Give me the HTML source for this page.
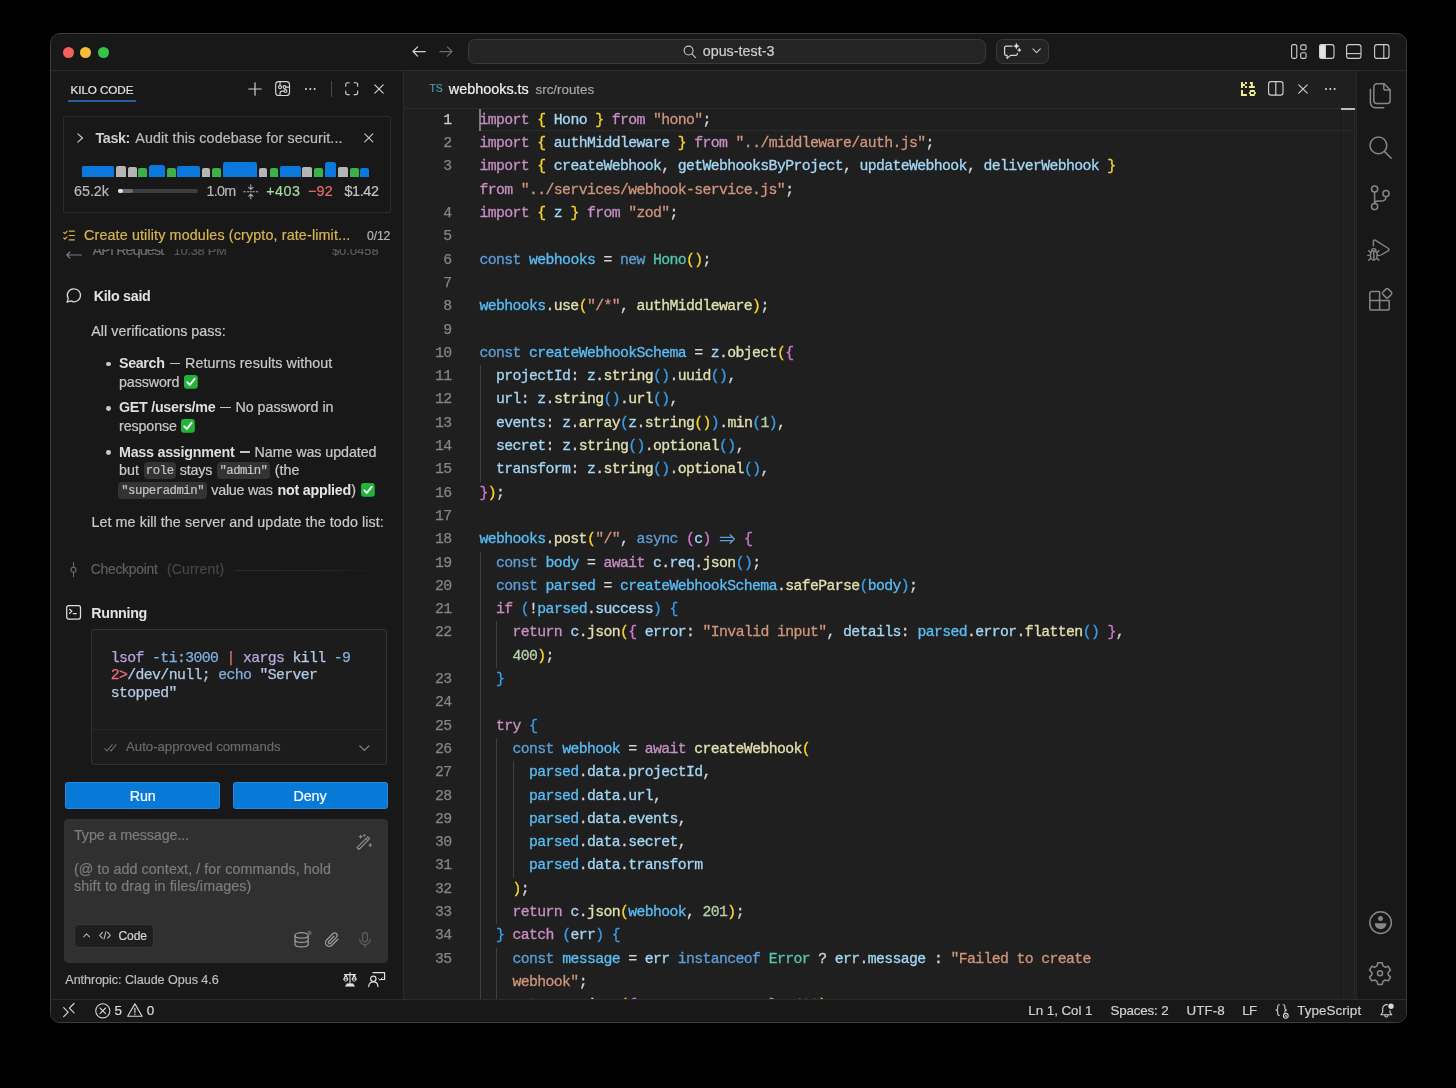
<!DOCTYPE html>
<html><head><meta charset="utf-8"><title>opus-test-3</title>
<style>
*{box-sizing:border-box;margin:0;padding:0}
html,body{width:1456px;height:1088px;background:#000;overflow:hidden}
body{position:relative;font-family:"Liberation Sans",sans-serif;color:#ccc;-webkit-font-smoothing:antialiased}
.a{position:absolute}
.t{position:absolute;white-space:pre;line-height:1;-webkit-text-stroke:.2px}
svg{position:absolute;overflow:visible}
#win{left:50px;top:33px;width:1357px;height:990px;background:#181818;border-radius:10px;border:1px solid #3c3c3c;box-shadow:0 0 0 1px #000}
.mono{font-family:"Liberation Mono",monospace}
.b{font-weight:700}
/* code colours */
.k{color:#c88fc4}.v{color:#a3d7f5}.s{color:#d0957c}.p{color:#d4d4d4}.c{color:#5c9fd8}.w{color:#59bdf6}
.y{color:#52c8b0}.f{color:#e0e0b0}.n{color:#b8d0ac}.b1{color:#fbd526}.b2{color:#d676d2}.b3{color:#379fec}
#code{left:404px;top:108.9px;width:938px;height:890.1px;overflow:hidden}
.r{position:absolute;left:0;height:23.3px;line-height:23.3px;white-space:pre;font-family:"Liberation Mono",monospace;font-size:14.8px;letter-spacing:-.62px;color:#d4d4d4;-webkit-text-stroke:.3px}
.r i{position:absolute;left:0;width:47.5px;text-align:right;font-style:normal;color:#858585;-webkit-text-stroke:.25px}
.r b{position:absolute;left:75.5px;font-weight:400}
.g{position:absolute;width:1px;background:#404040}
</style></head><body>
<div id="win" class="a"></div>
<div id="all" class="a" style="left:0;top:0;width:1456px;height:1088px;will-change:transform">
<!-- TITLE BAR -->
<div class="a" style="left:51px;top:70px;width:1355px;height:1px;background:#2b2b2b"></div>
<div class="a" style="left:62.5px;top:46.6px;width:11px;height:11px;border-radius:50%;background:#f4605b"></div>
<div class="a" style="left:80.1px;top:46.6px;width:11px;height:11px;border-radius:50%;background:#fabb38"></div>
<div class="a" style="left:97.7px;top:46.6px;width:11px;height:11px;border-radius:50%;background:#34c648"></div>
<svg style="left:411.5px;top:46px;width:14px;height:11px" viewBox="0 0 14 11" fill="none" stroke="#d0d0d0" stroke-width="1.25" stroke-linecap="round" stroke-linejoin="round"><path d="M13.2 5.5H1M5.6 0.9L1 5.5l4.6 4.6"/></svg>
<svg style="left:439px;top:46px;width:14px;height:11px" viewBox="0 0 14 11" fill="none" stroke="#6a6a6a" stroke-width="1.25" stroke-linecap="round" stroke-linejoin="round"><path d="M0.8 5.5H13M8.4 0.9L13 5.5l-4.6 4.6"/></svg>
<div class="a" style="left:468px;top:39px;width:517.5px;height:24.6px;background:#242424;border:1px solid #3a3a3a;border-radius:7px"></div>
<svg style="left:682.5px;top:44.5px;width:13.5px;height:13.5px" viewBox="0 0 14 14" fill="none" stroke="#c4c4c4" stroke-width="1.15" stroke-linecap="round"><circle cx="5.8" cy="5.8" r="4.6"/><path d="M9.2 9.2L13 13"/></svg>
<span class="t" style="left:702.7px;top:44.1px;font-size:14.3px;color:#cfcfcf;letter-spacing:0.024px">opus-test-3</span>
<div class="a" style="left:995.8px;top:39px;width:52.9px;height:24.6px;background:#232323;border:1px solid #3a3a3a;border-radius:7px"></div>
<!-- chat sparkle -->
<svg style="left:1003px;top:43.5px;width:19px;height:16px" viewBox="0 0 19 16" fill="none" stroke="#d6d6d6" stroke-width="1.25" stroke-linejoin="round" stroke-linecap="round"><path d="M9 2.200H3.200C2.300 2.200 1.600 2.900 1.600 3.800v6c0 .9.700 1.600 1.600 1.600h.900v3l3.400-3h5.200c.900 0 1.600-.700 1.600-1.600V9.400"/><path d="M13.400-.6l.8 1.900 1.900.8-1.900.8-.8 1.900-.8-1.900-1.900-.8 1.900-.8z" fill="#e6e6e6" stroke-width=".5"/><path d="M16.300 4.200l.6 1.300 1.300.6-1.300.6-.6 1.300-.6-1.300-1.300-.6 1.300-.6z" fill="#e6e6e6" stroke-width=".4"/></svg>
<svg style="left:1032.2px;top:48.2px;width:9.200px;height:5.600px" viewBox="0 0 10 6" fill="none" stroke="#c8c8c8" stroke-width="1.2" stroke-linecap="round" stroke-linejoin="round"><path d="M1 1l4 4 4-4"/></svg>
<!-- layout icons -->
<svg style="left:1291px;top:44px;width:16px;height:15px" viewBox="0 0 16 15" fill="none" stroke="#cfcfcf" stroke-width="1.1"><rect x=".6" y=".6" width="5.2" height="13.8" rx="1.6"/><rect x="9.700" y=".9" width="5.400" height="4.800" rx="1.500"/><rect x="9.700" y="8.800" width="5.400" height="5.600" rx="1.500"/></svg>
<svg style="left:1318.8px;top:44px;width:16px;height:15px" viewBox="0 0 16 15" fill="none" stroke="#cfcfcf" stroke-width="1.1"><rect x=".6" y=".6" width="14.4" height="13.8" rx="2.4"/><path d="M3 .6h3.4v13.8H3C1.7 14.4.6 13.3.6 12V3C.6 1.7 1.7.6 3 .6z" fill="#e4e4e4"/></svg>
<svg style="left:1346.2px;top:44px;width:16px;height:15px" viewBox="0 0 16 15" fill="none" stroke="#cfcfcf" stroke-width="1.1"><rect x=".6" y=".6" width="14.4" height="13.8" rx="2.4"/><path d="M.6 9.6H15"/></svg>
<svg style="left:1373.6px;top:44px;width:16px;height:15px" viewBox="0 0 16 15" fill="none" stroke="#cfcfcf" stroke-width="1.1"><rect x=".6" y=".6" width="14.4" height="13.8" rx="2.4"/><path d="M9.8 .6v13.8"/></svg>
<!-- SIDEBAR -->
<div class="a" style="left:403px;top:71px;width:1px;height:928px;background:#2b2b2b"></div>
<span class="t" style="left:70.6px;top:84.3px;font-size:11.7px;color:#e2e2e2;letter-spacing:-0.095px">KILO CODE</span>
<div class="a" style="left:68px;top:100.3px;width:67.5px;height:1.3px;background:#2a5f9e"></div>
<!-- header icons -->
<svg style="left:248px;top:82px;width:14px;height:14px" viewBox="0 0 14 14" fill="none" stroke="#d0d0d0" stroke-width="1.2" stroke-linecap="round"><path d="M7 .8v12.4M.8 7h12.4"/></svg>
<svg style="left:275px;top:81.3px;width:15.2px;height:15.2px" viewBox="0 0 16 16" fill="none" stroke="#d4d4d4" stroke-width="1.2" stroke-linecap="round"><rect x=".7" y=".7" width="14.6" height="14.6" rx="3.2"/><path d="M5.300.7v3.900"/><circle cx="5.300" cy="6.400" r="1.600"/><circle cx="10" cy="6.400" r="1.500"/><path d="M11.500 6.400h3.800"/><circle cx="11.100" cy="10.600" r="1.500"/><path d="M5.300 15.300v-2.500c0-1.300.9-2.200 2.200-2.200h2.100"/></svg>
<div class="a" style="left:304.5px;top:87.900px;width:2.300px;height:2.300px;border-radius:50%;background:#dcdcdc;box-shadow:4.300px 0 0 #dcdcdc,8.600px 0 0 #dcdcdc"></div>
<div class="a" style="left:330.6px;top:81px;width:1px;height:16.4px;background:#4a4a4a"></div>
<svg style="left:345px;top:82.2px;width:13.4px;height:13.4px" viewBox="0 0 14 14" fill="none" stroke="#d0d0d0" stroke-width="1.2" stroke-linecap="round" stroke-linejoin="round"><path d="M.8 4.4V2.6C.8 1.6 1.6.8 2.6.8h1.8M9.6.8h1.8c1 0 1.8.8 1.8 1.800v1.800M13.200 9.600v1.800c0 1-.8 1.800-1.800 1.800H9.600M4.400 13.200H2.600c-1 0-1.800-.8-1.800-1.800V9.600"/></svg>
<svg style="left:373.8px;top:84px;width:10px;height:10px" viewBox="0 0 10 10" fill="none" stroke="#d0d0d0" stroke-width="1.2" stroke-linecap="round"><path d="M.8.8l8.400 8.400M9.200.8L.8 9.200"/></svg>
<!-- task box -->
<div class="a" style="left:62.5px;top:116px;width:328.5px;height:96.8px;border:1px solid #2c2c2c;border-radius:2px;background:#181818"></div>
<svg style="left:77.300px;top:133.300px;width:6.400px;height:10px" viewBox="0 0 6.400 10" fill="none" stroke="#c8c8c8" stroke-width="1.15" stroke-linecap="round" stroke-linejoin="round"><path d="M.8.800l4.700 4.200-4.700 4.200"/></svg>
<span class="t" style="left:95.5px;top:131.2px;font-size:14.3px;color:#cfcfcf;font-weight:700;-webkit-text-stroke:0;letter-spacing:-0.359px">Task:</span>
<span class="t" style="left:135.3px;top:131.2px;font-size:14.3px;color:#bdbdbd;letter-spacing:0.114px">Audit this codebase for securit...</span>
<svg style="left:363.800px;top:133.400px;width:9.600px;height:9.600px" viewBox="0 0 10 10" fill="none" stroke="#c8c8c8" stroke-width="1.15" stroke-linecap="round"><path d="M.8.8l8.400 8.400M9.200.8L.8 9.200"/></svg>
<!-- timeline bars: bottom y=176.4 -->
<div class="a" style="left:0;top:.4px">
<div class="a" style="left:81.900px;top:165.500px;width:32.100px;height:10.900px;background:#0b78de;border-radius:1.5px 1.5px 0 0"></div>
<div class="a" style="left:116.100px;top:166px;width:9.700px;height:10.400px;background:#b5b5b5;border-radius:2px 2px 0 0"></div>
<div class="a" style="left:128px;top:166.800px;width:8.500px;height:9.600px;background:#b5b5b5;border-radius:2px 2px 0 0"></div>
<div class="a" style="left:138.300px;top:167.900px;width:8.800px;height:8.500px;background:#3eb04b;border-radius:2px 2px 0 0"></div>
<div class="a" style="left:149.200px;top:164.200px;width:15.800px;height:12.200px;background:#0b78de;border-radius:2.500px 2.500px 0 0"></div>
<div class="a" style="left:166.800px;top:167.900px;width:8.900px;height:8.500px;background:#3eb04b;border-radius:2px 2px 0 0"></div>
<div class="a" style="left:177.300px;top:165.600px;width:22.700px;height:10.800px;background:#0b78de;border-radius:2px 2px 0 0"></div>
<div class="a" style="left:201.600px;top:167.600px;width:8.800px;height:8.800px;background:#b5b5b5;border-radius:2px 2px 0 0"></div>
<div class="a" style="left:212.100px;top:167.900px;width:8.900px;height:8.500px;background:#3eb04b;border-radius:2px 2px 0 0"></div>
<div class="a" style="left:222.900px;top:161.400px;width:33.800px;height:15px;background:#0b78de;border-radius:2.500px 2.500px 0 0"></div>
<div class="a" style="left:259px;top:167.600px;width:8.400px;height:8.800px;background:#b5b5b5;border-radius:2px 2px 0 0"></div>
<div class="a" style="left:269.500px;top:167.900px;width:8.700px;height:8.500px;background:#3eb04b;border-radius:2px 2px 0 0"></div>
<div class="a" style="left:280px;top:165.600px;width:20.500px;height:10.800px;background:#0b78de;border-radius:2px 2px 0 0"></div>
<div class="a" style="left:302.300px;top:166.800px;width:9.700px;height:9.600px;background:#b5b5b5;border-radius:2px 2px 0 0"></div>
<div class="a" style="left:314px;top:167.900px;width:8.500px;height:8.500px;background:#3eb04b;border-radius:2px 2px 0 0"></div>
<div class="a" style="left:324.700px;top:162px;width:11.600px;height:14.400px;background:#0b78de;border-radius:2.500px 2.500px 0 0"></div>
<div class="a" style="left:338.300px;top:166.800px;width:9.700px;height:9.600px;background:#b5b5b5;border-radius:2px 2px 0 0"></div>
<div class="a" style="left:350px;top:167.900px;width:8.800px;height:8.500px;background:#3eb04b;border-radius:2px 2px 0 0"></div>
<div class="a" style="left:360.400px;top:167.600px;width:9.100px;height:8.800px;background:#0b78de;border-radius:2px 2px 0 0"></div>
</div>
<span class="t" style="left:74.0px;top:184.1px;font-size:14.3px;color:#b8b8b8">65.2k</span>
<div class="a" style="left:118px;top:189px;width:79.700px;height:4.200px;border-radius:2.100px;background:#3d3d3d"></div>
<div class="a" style="left:118px;top:189px;width:15.400px;height:4.200px;border-radius:2.100px;background:#6b6b6b"></div>
<div class="a" style="left:118px;top:189px;width:5px;height:4.200px;border-radius:2.100px;background:#e4e4e4"></div>
<span class="t" style="left:206.6px;top:184.1px;font-size:14.3px;color:#b8b8b8;letter-spacing:-0.749px">1.0m</span>
<!-- fold icon -->
<svg style="left:243px;top:183.500px;width:15.600px;height:15.600px" viewBox="0 0 16 16" fill="none" stroke="#b0b0b0" stroke-width="1.05" stroke-linecap="round" stroke-linejoin="round"><path d="M8 .8v4.600M5.800 3.400L8 5.600l2.200-2.200M8 15.200v-4.600M5.800 12.600L8 10.400l2.200 2.200"/><path d="M.8 8h1.500M4.400 8h1.500M7.300 8h1.500M10.200 8h1.500M13.600 8h1.600"/></svg>
<span class="t" style="left:266.3px;top:184.1px;font-size:14.3px;color:#a5dba0;letter-spacing:0.449px">+403</span>
<span class="t" style="left:308.0px;top:184.1px;font-size:14.3px;color:#ea6a6a;letter-spacing:0.245px">−92</span>
<span class="t" style="left:344.5px;top:184.1px;font-size:14.3px;color:#c4c4c4;letter-spacing:-0.336px">$1.42</span>
<!-- todo row -->
<svg style="left:63px;top:229.700px;width:12px;height:11.400px" viewBox="0 0 12 11.400" fill="none" stroke="#d6b24c" stroke-width="1.15" stroke-linecap="round" stroke-linejoin="round"><path d="M.7 2.400l1.200 1.200L4 1.300M.7 7.900l1.200 1.200L4 6.800M6.200 1.100h5.200M6.200 5.500h5.200M6.200 9.900h5.200"/></svg>
<span class="t" style="left:84.0px;top:228.3px;font-size:14.3px;color:#d9b651;letter-spacing:0.146px">Create utility modules (crypto, rate-limit...</span>
<span class="t" style="left:367.0px;top:230.0px;font-size:12.2px;color:#b4b4b4;letter-spacing:-0.134px">0/12</span>
<!-- clipped previous row -->
<div class="a" style="left:60px;top:249.300px;width:335px;height:12px;overflow:hidden">
 <svg style="left:5.800px;top:1.900px;width:16px;height:8px" viewBox="0 0 16 8" fill="none" stroke="#7d7d7d" stroke-width="1.1" stroke-linecap="round" stroke-linejoin="round"><path d="M15.400 4H.8M3.800 1L.8 4l3 3"/></svg>
 <span class="t" style="left:32.6px;top:-6.7px;font-size:14.3px;color:#6f6f6f;letter-spacing:-0.871px">API Request</span>
 <span class="t" style="left:113.6px;top:-5.6px;font-size:13.0px;color:#585858;letter-spacing:-0.345px">10:38 PM</span>
 <span class="t" style="left:271.9px;top:-5.6px;font-size:13.0px;color:#5c5c5c;letter-spacing:-0.043px">$0.0458</span>
</div>
<!-- KILO SAID -->
<svg style="left:65.800px;top:288.300px;width:15.600px;height:15px" viewBox="0 0 16 15.400" fill="none" stroke="#d8d8d8" stroke-width="1.3" stroke-linejoin="round" stroke-linecap="round"><path d="M8.400.9A6.600 6.600 0 1 1 5 13.200L1 14.600l1.300-3.700A6.600 6.600 0 0 1 8.400.9z"/></svg>
<span class="t" style="left:93.7px;top:288.5px;font-size:14.3px;color:#e2e2e2;font-weight:700;-webkit-text-stroke:0;letter-spacing:-0.310px">Kilo said</span>
<span class="t" style="left:91.2px;top:323.9px;font-size:14.3px;color:#c9c9c9;letter-spacing:0.048px">All verifications pass:</span>
<div class="a" style="left:105.900px;top:361.600px;width:4.800px;height:4.800px;border-radius:50%;background:#c9c9c9"></div>
<span class="t" style="left:119.0px;top:356.0px;font-size:14.3px;color:#dedede;font-weight:700;-webkit-text-stroke:0;letter-spacing:-0.365px">Search</span>
<div class="a" style="left:169.6px;top:362.9px;width:10.4px;height:1.2px;background:#c4c4c4"></div>
<span class="t" style="left:185.1px;top:356.0px;font-size:14.3px;color:#c9c9c9;letter-spacing:0.082px">Returns results without</span>
<span class="t" style="left:119.0px;top:374.6px;font-size:14.3px;color:#c9c9c9;letter-spacing:-0.113px">password</span>
<svg style="left:183.500px;top:375px;width:13.800px;height:13.800px" viewBox="0 0 14 14"><rect width="14" height="14" rx="3" fill="#22b33a"/><path d="M3.300 7.400l2.600 2.700 4.900-6.200" fill="none" stroke="#fff" stroke-width="1.900" stroke-linecap="round" stroke-linejoin="round"/></svg>
<div class="a" style="left:105.900px;top:405.900px;width:4.800px;height:4.800px;border-radius:50%;background:#c9c9c9"></div>
<span class="t" style="left:119.0px;top:400.3px;font-size:14.3px;color:#dedede;font-weight:700;-webkit-text-stroke:0;letter-spacing:-0.287px">GET /users/me</span>
<div class="a" style="left:220.2px;top:407.2px;width:10.4px;height:1.2px;background:#c4c4c4"></div>
<span class="t" style="left:235.4px;top:400.3px;font-size:14.3px;color:#c9c9c9;letter-spacing:-0.032px">No password in</span>
<span class="t" style="left:119.0px;top:418.7px;font-size:14.3px;color:#c9c9c9;letter-spacing:-0.116px">response</span>
<svg style="left:181.400px;top:419.300px;width:13.800px;height:13.800px" viewBox="0 0 14 14"><rect width="14" height="14" rx="3" fill="#22b33a"/><path d="M3.300 7.400l2.600 2.700 4.900-6.200" fill="none" stroke="#fff" stroke-width="1.900" stroke-linecap="round" stroke-linejoin="round"/></svg>
<div class="a" style="left:105.900px;top:450px;width:4.800px;height:4.800px;border-radius:50%;background:#c9c9c9"></div>
<span class="t" style="left:119.0px;top:444.5px;font-size:14.3px;color:#dedede;font-weight:700;-webkit-text-stroke:0;letter-spacing:-0.252px">Mass assignment</span>
<div class="a" style="left:239.5px;top:451.4px;width:10.4px;height:1.2px;background:#c4c4c4"></div>
<span class="t" style="left:254.5px;top:444.5px;font-size:14.3px;color:#c9c9c9;letter-spacing:-0.074px">Name was updated</span>
<span class="t" style="left:119.0px;top:463.2px;font-size:14.3px;color:#c9c9c9;letter-spacing:0.042px">but</span>
<div class="a" style="left:143.700px;top:462.200px;width:32.200px;height:17.200px;border-radius:4px;background:#333"></div>
<span class="t mono" style="left:145.8px;top:465.2px;font-size:12.3px;color:#c4c4c4;letter-spacing:-0.408px">role</span>
<span class="t" style="left:179.7px;top:463.2px;font-size:14.3px;color:#c9c9c9;letter-spacing:-0.155px">stays</span>
<div class="a" style="left:216.800px;top:462.200px;width:53.300px;height:17.200px;border-radius:4px;background:#333"></div>
<span class="t mono" style="left:219.5px;top:465.2px;font-size:12.3px;color:#c4c4c4;letter-spacing:-0.551px">"admin"</span>
<span class="t" style="left:274.7px;top:463.2px;font-size:14.3px;color:#c9c9c9;letter-spacing:0.040px">(the</span>
<div class="a" style="left:118.100px;top:481.900px;width:89px;height:17.200px;border-radius:4px;background:#333"></div>
<span class="t mono" style="left:121.2px;top:484.9px;font-size:12.3px;color:#c4c4c4;letter-spacing:-0.472px">"superadmin"</span>
<span class="t" style="left:211.3px;top:482.5px;font-size:14.3px;color:#c9c9c9;letter-spacing:-0.242px">value was</span>
<span class="t" style="left:277.6px;top:482.5px;font-size:14.3px;color:#e4e4e4;font-weight:700;-webkit-text-stroke:0;letter-spacing:-0.259px">not applied</span>
<span class="t" style="left:351.3px;top:482.5px;font-size:14.3px;color:#c9c9c9;letter-spacing:-0.366px">)</span>
<svg style="left:360.900px;top:482.900px;width:13.800px;height:13.800px" viewBox="0 0 14 14"><rect width="14" height="14" rx="3" fill="#22b33a"/><path d="M3.300 7.400l2.600 2.700 4.900-6.200" fill="none" stroke="#fff" stroke-width="1.900" stroke-linecap="round" stroke-linejoin="round"/></svg>
<span class="t" style="left:91.4px;top:515.3px;font-size:14.3px;color:#c9c9c9;letter-spacing:0.083px">Let me kill the server and update the todo list:</span>
<!-- checkpoint -->
<svg style="left:70.400px;top:561.800px;width:7px;height:15.400px" viewBox="0 0 7 15.400" fill="none" stroke="#6c6c6c" stroke-width="1.1" stroke-linecap="round"><path d="M3.500.6v4.400M3.500 10.400v4.400"/><circle cx="3.500" cy="7.700" r="2.500"/></svg>
<span class="t" style="left:90.8px;top:562.8px;font-size:13.8px;color:#5f5f5f;letter-spacing:-0.223px">Checkpoint</span>
<span class="t" style="left:167.0px;top:562.8px;font-size:13.8px;color:#464646;letter-spacing:0.233px">(Current)</span>
<div class="a" style="left:235px;top:570px;width:133px;height:1px;background:linear-gradient(90deg,#2c2c2c,#262626 70%,#1b1b1b)"></div>
<!-- running -->
<svg style="left:66.400px;top:604.600px;width:15.200px;height:14.800px" viewBox="0 0 15.200 14.800" fill="none" stroke="#e0e0e0" stroke-width="1.25" stroke-linecap="round" stroke-linejoin="round"><rect x=".7" y=".7" width="13.800" height="13.400" rx="2"/><path d="M3.600 4.300l2.300 2-2.300 2M7.300 8.600h3"/></svg>
<span class="t" style="left:91.3px;top:605.8px;font-size:14.3px;color:#e2e2e2;font-weight:700;-webkit-text-stroke:0;letter-spacing:-0.324px">Running</span>
<div class="a" style="left:91px;top:629.300px;width:295.500px;height:136.200px;border:1px solid #333;border-radius:3px;background:#1c1c1c"></div>
<div class="a" style="left:92px;top:728.600px;width:293.500px;height:1px;background:#262626"></div>
<div class="a mono" style="left:110.800px;top:649.900px;font-size:14.800px;letter-spacing:-.62px;line-height:17.400px;white-space:pre;color:#b4cbe6;-webkit-text-stroke:.25px"><span style="color:#b9a7e2">lsof</span> <span style="color:#80afe0">-ti:3000</span> <span style="color:#e2706c">|</span> <span style="color:#b9a7e2">xargs</span> kill <span style="color:#80afe0">-9</span>
<span style="color:#ea7079">2&gt;</span>/dev/null<span style="color:#b8c4d4">;</span> <span style="color:#80afe0">echo</span> "Server
stopped"</div>
<svg style="left:104.400px;top:744.400px;width:12.600px;height:7.600px" viewBox="0 0 12.600 7.600" fill="none" stroke="#6a6a6a" stroke-width="1.1" stroke-linecap="round" stroke-linejoin="round"><path d="M.7 4.600l2.200 2.300L8.300.7M6.300 6l.9.900L12 .7"/></svg>
<span class="t" style="left:126.0px;top:740.3px;font-size:13.2px;color:#6a6a6a">Auto-approved commands</span>
<svg style="left:358.800px;top:744.600px;width:10.800px;height:6.400px" viewBox="0 0 10.800 6.400" fill="none" stroke="#8a8a8a" stroke-width="1.2" stroke-linecap="round" stroke-linejoin="round"><path d="M.8.800l4.600 4.600L10 .8"/></svg>
<!-- buttons -->
<div class="a" style="left:65.300px;top:781.800px;width:154.800px;height:27.100px;background:#067ad6;border:1px solid #2688de;border-radius:2.500px"></div>
<div class="a" style="left:232.500px;top:781.800px;width:155px;height:27.100px;background:#067ad6;border:1px solid #2688de;border-radius:2.500px"></div>
<span class="t" style="left:129.7px;top:788.7px;font-size:14.3px;color:#fff;letter-spacing:-0.078px">Run</span>
<span class="t" style="left:293.4px;top:788.7px;font-size:14.3px;color:#fff;letter-spacing:-0.048px">Deny</span>
<!-- input -->
<div class="a" style="left:64.300px;top:818.600px;width:324.200px;height:144.400px;background:#303030;border-radius:4.500px"></div>
<span class="t" style="left:74.0px;top:827.9px;font-size:14.3px;color:#7c7c7c;letter-spacing:-0.108px">Type a message...</span>
<span class="t" style="left:74.0px;top:861.8px;font-size:14.3px;color:#7c7c7c;letter-spacing:0.064px">(@ to add context, / for commands, hold</span>
<span class="t" style="left:74.0px;top:879.1px;font-size:14.3px;color:#7c7c7c;letter-spacing:0.116px">shift to drag in files/images)</span>
<svg style="left:356.400px;top:833.600px;width:17px;height:16.400px" viewBox="0 0 17 16.400" fill="none" stroke="#8c8c8c" stroke-width="1.15" stroke-linecap="round" stroke-linejoin="round"><path d="M1 13.600L11.800 2.800l1.900 1.900L2.900 15.500zM9.900 4.700l1.900 1.900"/><path d="M4.600 1.300v2.600M3.300 2.600h2.600M14.300 9.800v2.600M13 11.100h2.600M8.300.7v1.400M7.600 1.400H9"/></svg>
<div class="a" style="left:74px;top:923.700px;width:80px;height:24px;background:#1e1e1e;border:1px solid #383838;border-radius:5px"></div>
<svg style="left:82.700px;top:933.300px;width:7.200px;height:4.600px" viewBox="0 0 7.200 4.600" fill="none" stroke="#b0b0b0" stroke-width="1.100" stroke-linecap="round" stroke-linejoin="round"><path d="M.7 3.900l2.900-3 2.900 3"/></svg>
<svg style="left:99.300px;top:931.300px;width:12px;height:8.600px" viewBox="0 0 12 8.600" fill="none" stroke="#c0c0c0" stroke-width="1.050" stroke-linecap="round" stroke-linejoin="round"><path d="M3.300 1.400L.7 4.300l2.600 2.900M8.700 1.400l2.600 2.900-2.600 2.900M7 .7L5 7.900"/></svg>
<span class="t" style="left:118.5px;top:929.8px;font-size:12.0px;color:#d4d4d4;letter-spacing:-0.072px">Code</span>
<svg style="left:293.600px;top:931.400px;width:17.400px;height:16.400px" viewBox="0 0 17.400 16.400" fill="none" stroke="#9c9c9c" stroke-width="1.250"><ellipse cx="7.600" cy="4.400" rx="6.600" ry="2.700"/><path d="M1 4.400v8.800c0 1.500 2.900 2.700 6.600 2.700s6.600-1.200 6.600-2.700V4.400M1 8.800c0 1.500 2.900 2.700 6.600 2.700s6.600-1.200 6.600-2.700"/><circle cx="15.400" cy="1.900" r="2.300" fill="#5e5e5e" stroke="none"/></svg>
<svg style="left:324.300px;top:931.800px;width:15.200px;height:16px" viewBox="0 0 15.200 16" fill="none" stroke="#9a9a9a" stroke-width="1.250" stroke-linecap="round" stroke-linejoin="round"><path d="M13.900 7.300l-6 6a3.700 3.700 0 0 1-5.300-5.300l6.200-6.200a2.500 2.500 0 0 1 3.600 3.600l-6.100 6.100a1.300 1.300 0 0 1-1.800-1.800l5.500-5.500"/></svg>
<svg style="left:359px;top:931.800px;width:12px;height:16px" viewBox="0 0 12 16" fill="none" stroke="#5e5e5e" stroke-width="1.250" stroke-linecap="round"><rect x="3.600" y=".7" width="4.800" height="9.200" rx="2.400"/><path d="M.8 7.400a5.200 5.200 0 0 0 10.400 0M6 12.600v2.700"/></svg>
<span class="t" style="left:65.3px;top:973.8px;font-size:12.6px;color:#bdbdbd;letter-spacing:-0.051px">Anthropic: Claude Opus 4.6</span>
<svg style="left:343px;top:972px;width:14px;height:14.600px" viewBox="0 0 14 14.600" fill="none" stroke="#e0e0e0" stroke-width="1.100" stroke-linecap="round" stroke-linejoin="round"><path d="M7 .6v11M1.500 2.600h11M2.800 2.800L.9 7.200M2.800 2.800l1.900 4.400M11.200 2.800L9.300 7.200M11.200 2.800l1.900 4.400"/><path d="M.8 7.300a2 1.900 0 0 0 4 0zM9.200 7.300a2 1.900 0 0 0 4 0z" stroke-width=".9"/><path d="M2.600 14.100l1.300-2.300h6.200l1.300 2.300z" fill="#e0e0e0" stroke-width=".6"/></svg>
<svg style="left:367.700px;top:971.800px;width:17.600px;height:15.200px" viewBox="0 0 17.600 15.200" fill="none" stroke="#e0e0e0" stroke-width="1.200" stroke-linecap="round" stroke-linejoin="round"><circle cx="5.300" cy="6.800" r="2.700"/><path d="M.7 14.600c0-2.900 2-4.700 4.600-4.700s4.600 1.800 4.600 4.700"/><path d="M5 .7h11.600v6.800h-3.400"/><path d="M10.800 6.800l1.300 1.400 2.400-2.500" stroke-width="1"/></svg>
<!-- EDITOR BG + TABS -->
<div class="a" style="left:404px;top:71px;width:952px;height:928px;background:#1f1f1f"></div>
<div class="a" style="left:404px;top:71px;width:952px;height:37.500px;background:#1f1f1f"></div>
<div class="a" style="left:404px;top:108px;width:952px;height:1px;background:#2b2b2b"></div>
<span class="t" style="left:429.6px;top:84.1px;font-size:10.4px;color:#4f94b8;letter-spacing:-0.291px">TS</span>
<span class="t" style="left:448.8px;top:82.0px;font-size:14.4px;color:#f2f2f2">webhooks.ts</span>
<span class="t" style="left:535.6px;top:82.7px;font-size:13.3px;color:#a6a6a6;letter-spacing:0.011px">src/routes</span>
<!-- kilo logo -->
<svg style="left:1240.800px;top:82px;width:14.800px;height:14px" viewBox="0 0 15 14" fill="#eef08c"><path d="M0 0h2v2h2v2H2v2H0zM4 0h2v2H4zM4 4h2v2H4zM9 0h3v4h2v2H8V4h2V2H9zM0 8h2v4h4v2H0zM9 8h5v2H9zM8 10h2v2H8zM13 10h2v2h-2zM9 12h5v2H9z"/></svg>
<svg style="left:1267.600px;top:81.400px;width:15.600px;height:14.800px" viewBox="0 0 15.600 14.800" fill="none" stroke="#d0d0d0" stroke-width="1.150"><rect x=".6" y=".6" width="14.400" height="13.600" rx="2.400"/><path d="M7.800.6v13.600"/></svg>
<svg style="left:1298.200px;top:84px;width:10px;height:10px" viewBox="0 0 10 10" fill="none" stroke="#d0d0d0" stroke-width="1.150" stroke-linecap="round"><path d="M.8.8l8.400 8.400M9.200.8L.8 9.200"/></svg>
<div class="a" style="left:1325.200px;top:87.900px;width:2.300px;height:2.300px;border-radius:50%;background:#dcdcdc;box-shadow:4.300px 0 0 #dcdcdc,8.600px 0 0 #dcdcdc"></div>
<!-- scrollbar / overview ruler -->
<div class="a" style="left:1341px;top:109px;width:1px;height:890px;background:#181818"></div><div class="a" style="left:1342px;top:109px;width:1px;height:890px;background:#272727"></div><div class="a" style="left:1354px;top:109px;width:1px;height:890px;background:#262626"></div>
<div class="a" style="left:1342px;top:130.300px;width:13px;height:1px;background:#2a2a2a"></div>
<div class="a" style="left:1341px;top:108px;width:14.300px;height:1.700px;background:#bcbcbc"></div>
<!-- CODE -->
<div id="code" class="a">
<div class="a" style="left:75px;top:-.9px;width:863px;height:22.800px;border-top:1px solid #2a2a2a;border-bottom:1px solid #2a2a2a"></div>
<div class="a" style="left:75px;top:-.5px;width:2px;height:22.500px;background:#7c7c7c"></div>
<div class="g" style="left:75.8px;top:256.3px;height:116.5px"></div>
<div class="g" style="left:75.8px;top:442.7px;height:466.0px"></div>
<div class="g" style="left:92.3px;top:512.6px;height:46.6px"></div>
<div class="g" style="left:92.3px;top:629.1px;height:186.4px"></div>
<div class="g" style="left:92.3px;top:838.8px;height:69.9px"></div>
<div class="g" style="left:108.8px;top:652.4px;height:116.5px"></div>
<div class="r" style="top:0.0px"><i style="color:#ccc">1</i><b><span class="k">import</span> <span class="b1">{</span> <span class="v">Hono</span> <span class="b1">}</span> <span class="k">from</span> <span class="s">"hono"</span>;</b></div>
<div class="r" style="top:23.3px"><i>2</i><b><span class="k">import</span> <span class="b1">{</span> <span class="v">authMiddleware</span> <span class="b1">}</span> <span class="k">from</span> <span class="s">"../middleware/auth.js"</span>;</b></div>
<div class="r" style="top:46.6px"><i>3</i><b><span class="k">import</span> <span class="b1">{</span> <span class="v">createWebhook</span>, <span class="v">getWebhooksByProject</span>, <span class="v">updateWebhook</span>, <span class="v">deliverWebhook</span> <span class="b1">}</span></b></div>
<div class="r" style="top:69.9px"><b><span class="k">from</span> <span class="s">"../services/webhook-service.js"</span>;</b></div>
<div class="r" style="top:93.2px"><i>4</i><b><span class="k">import</span> <span class="b1">{</span> <span class="v">z</span> <span class="b1">}</span> <span class="k">from</span> <span class="s">"zod"</span>;</b></div>
<div class="r" style="top:116.5px"><i>5</i><b></b></div>
<div class="r" style="top:139.8px"><i>6</i><b><span class="c">const</span> <span class="w">webhooks</span> = <span class="c">new</span> <span class="y">Hono</span><span class="b1">()</span>;</b></div>
<div class="r" style="top:163.1px"><i>7</i><b></b></div>
<div class="r" style="top:186.4px"><i>8</i><b><span class="w">webhooks</span>.<span class="f">use</span><span class="b1">(</span><span class="s">"/*"</span>, <span class="f">authMiddleware</span><span class="b1">)</span>;</b></div>
<div class="r" style="top:209.7px"><i>9</i><b></b></div>
<div class="r" style="top:233.0px"><i>10</i><b><span class="c">const</span> <span class="w">createWebhookSchema</span> = <span class="v">z</span>.<span class="f">object</span><span class="b1">(</span><span class="b2">{</span></b></div>
<div class="r" style="top:256.3px"><i>11</i><b>  <span class="v">projectId</span>: <span class="v">z</span>.<span class="f">string</span><span class="b3">()</span>.<span class="f">uuid</span><span class="b3">()</span>,</b></div>
<div class="r" style="top:279.6px"><i>12</i><b>  <span class="v">url</span>: <span class="v">z</span>.<span class="f">string</span><span class="b3">()</span>.<span class="f">url</span><span class="b3">()</span>,</b></div>
<div class="r" style="top:302.9px"><i>13</i><b>  <span class="v">events</span>: <span class="v">z</span>.<span class="f">array</span><span class="b3">(</span><span class="v">z</span>.<span class="f">string</span><span class="b1">()</span><span class="b3">)</span>.<span class="f">min</span><span class="b3">(</span><span class="n">1</span><span class="b3">)</span>,</b></div>
<div class="r" style="top:326.2px"><i>14</i><b>  <span class="v">secret</span>: <span class="v">z</span>.<span class="f">string</span><span class="b3">()</span>.<span class="f">optional</span><span class="b3">()</span>,</b></div>
<div class="r" style="top:349.5px"><i>15</i><b>  <span class="v">transform</span>: <span class="v">z</span>.<span class="f">string</span><span class="b3">()</span>.<span class="f">optional</span><span class="b3">()</span>,</b></div>
<div class="r" style="top:372.8px"><i>16</i><b><span class="b2">}</span><span class="b1">)</span>;</b></div>
<div class="r" style="top:396.1px"><i>17</i><b></b></div>
<div class="r" style="top:419.4px"><i>18</i><b><span class="w">webhooks</span>.<span class="f">post</span><span class="b1">(</span><span class="s">"/"</span>, <span class="c">async</span> <span class="b2">(</span><span class="v">c</span><span class="b2">)</span>    <span class="b2">{</span></b></div>
<div class="r" style="top:442.7px"><i>19</i><b>  <span class="c">const</span> <span class="w">body</span> = <span class="k">await</span> <span class="v">c</span>.<span class="v">req</span>.<span class="f">json</span><span class="b3">()</span>;</b></div>
<div class="r" style="top:466.0px"><i>20</i><b>  <span class="c">const</span> <span class="w">parsed</span> = <span class="w">createWebhookSchema</span>.<span class="f">safeParse</span><span class="b3">(</span><span class="w">body</span><span class="b3">)</span>;</b></div>
<div class="r" style="top:489.3px"><i>21</i><b>  <span class="k">if</span> <span class="b3">(</span>!<span class="w">parsed</span>.<span class="v">success</span><span class="b3">)</span> <span class="b3">{</span></b></div>
<div class="r" style="top:512.6px"><i>22</i><b>    <span class="k">return</span> <span class="v">c</span>.<span class="f">json</span><span class="b1">(</span><span class="b2">{</span> <span class="v">error</span>: <span class="s">"Invalid input"</span>, <span class="v">details</span>: <span class="w">parsed</span>.<span class="v">error</span>.<span class="f">flatten</span><span class="b3">()</span> <span class="b2">}</span>,</b></div>
<div class="r" style="top:535.9px"><b>    <span class="n">400</span><span class="b1">)</span>;</b></div>
<div class="r" style="top:559.2px"><i>23</i><b>  <span class="b3">}</span></b></div>
<div class="r" style="top:582.5px"><i>24</i><b></b></div>
<div class="r" style="top:605.8px"><i>25</i><b>  <span class="k">try</span> <span class="b3">{</span></b></div>
<div class="r" style="top:629.1px"><i>26</i><b>    <span class="c">const</span> <span class="w">webhook</span> = <span class="k">await</span> <span class="f">createWebhook</span><span class="b1">(</span></b></div>
<div class="r" style="top:652.4px"><i>27</i><b>      <span class="w">parsed</span>.<span class="v">data</span>.<span class="v">projectId</span>,</b></div>
<div class="r" style="top:675.7px"><i>28</i><b>      <span class="w">parsed</span>.<span class="v">data</span>.<span class="v">url</span>,</b></div>
<div class="r" style="top:699.0px"><i>29</i><b>      <span class="w">parsed</span>.<span class="v">data</span>.<span class="v">events</span>,</b></div>
<div class="r" style="top:722.3px"><i>30</i><b>      <span class="w">parsed</span>.<span class="v">data</span>.<span class="v">secret</span>,</b></div>
<div class="r" style="top:745.6px"><i>31</i><b>      <span class="w">parsed</span>.<span class="v">data</span>.<span class="v">transform</span></b></div>
<div class="r" style="top:768.9px"><i>32</i><b>    <span class="b1">)</span>;</b></div>
<div class="r" style="top:792.2px"><i>33</i><b>    <span class="k">return</span> <span class="v">c</span>.<span class="f">json</span><span class="b1">(</span><span class="w">webhook</span>, <span class="n">201</span><span class="b1">)</span>;</b></div>
<div class="r" style="top:815.5px"><i>34</i><b>  <span class="b3">}</span> <span class="k">catch</span> <span class="b3">(</span><span class="v">err</span><span class="b3">)</span> <span class="b3">{</span></b></div>
<div class="r" style="top:838.8px"><i>35</i><b>    <span class="c">const</span> <span class="w">message</span> = <span class="v">err</span> <span class="c">instanceof</span> <span class="y">Error</span> ? <span class="v">err</span>.<span class="v">message</span> : <span class="s">"Failed to create</span></b></div>
<div class="r" style="top:862.1px"><b>    <span class="s">webhook"</span>;</b></div>
<div class="r" style="top:885.4px"><i>36</i><b>    <span class="k">return</span> <span class="v">c</span>.<span class="f">json</span><span class="b1">(</span><span class="b2">{</span> <span class="v">error</span>: <span class="w">message</span> <span class="b2">}</span>, <span class="n">400</span><span class="b1">)</span>;</b></div>
<svg style="left:315.600px;top:425.100px;width:14.800px;height:10px" viewBox="0 0 14.800 10" fill="none" stroke="#5c9fd8" stroke-width="1.300" stroke-linecap="round" stroke-linejoin="round"><path d="M.4 3.300H12M.4 6.700H12M10.200.7L14.300 5l-4.100 4.300"/></svg>
</div>
<!-- ACTIVITY BAR (right) -->
<div class="a" style="left:1356px;top:71px;width:50px;height:928px;background:#181818"></div>
<div class="a" style="left:1355.500px;top:71px;width:1px;height:928px;background:#282828"></div>
<!-- files -->
<svg style="left:1368.600px;top:83px;width:22px;height:25.600px" viewBox="0 0 22 25.600" fill="none" stroke="#868686" stroke-width="1.500" stroke-linejoin="round" stroke-linecap="round"><path d="M7.800.8h7.400l5.900 5.900v10.800c0 1.700-1.300 3-3 3H7.800c-1.700 0-3-1.300-3-3V3.800c0-1.700 1.300-3 3-3z"/><path d="M14.800.9v4.300c0 1 .8 1.800 1.800 1.800H21"/><path d="M1.400 6.200v13.400c0 2.900 2.300 5.200 5.200 5.200h8.200"/></svg>
<!-- search -->
<svg style="left:1368.800px;top:135.600px;width:23px;height:23px" viewBox="0 0 23 23" fill="none" stroke="#868686" stroke-width="1.500" stroke-linecap="round"><circle cx="9.400" cy="9.400" r="8.400"/><path d="M15.600 15.600l6.600 6.600"/></svg>
<!-- source control -->
<svg style="left:1370px;top:184.600px;width:20.400px;height:25.600px" viewBox="0 0 20.400 25.600" fill="none" stroke="#868686" stroke-width="1.500" stroke-linecap="round" stroke-linejoin="round"><circle cx="4.600" cy="4" r="3.100"/><circle cx="4.600" cy="21.600" r="3.100"/><circle cx="16" cy="8.600" r="3.100"/><path d="M4.600 7.100v11.400M16 11.700c0 3-2 4.400-5 4.400H8.400c-2.200 0-3.800.9-3.800 2.400"/></svg>
<!-- debug -->
<svg style="left:1367.400px;top:238.600px;width:23.400px;height:23px" viewBox="0 0 23.400 23" fill="none" stroke="#868686" stroke-width="1.450" stroke-linecap="round" stroke-linejoin="round"><path d="M6.400 6.800V2.200c0-.9 1-1.500 1.800-1l13.200 8.300c.8.500.8 1.600 0 2.100l-7.300 4.400"/><ellipse cx="6.800" cy="16.400" rx="3.400" ry="4.600"/><path d="M4.600 11.600c0-1.200 1-2 2.200-2s2.200.8 2.200 2M3.400 16.400H.8M12.800 16.400h-2.600M3.900 13.600l-2.300-1.800M9.700 13.600l2.300-1.800M3.900 19.200l-2.300 2M9.700 19.200l2.300 2M6.800 12.400v8"/></svg>
<!-- extensions -->
<svg style="left:1368.800px;top:288px;width:23.400px;height:22.800px" viewBox="0 0 23.400 22.800" fill="none" stroke="#868686" stroke-width="1.500" stroke-linejoin="round"><path d="M.8 5.400c0-1 .8-1.800 1.800-1.800h8v9h-9.800zM.8 12.600h9.800v9.400H2.600c-1 0-1.800-.8-1.800-1.800zM10.600 12.600h9.600v7.600c0 1-.8 1.800-1.800 1.800h-7.800z"/><path d="M16.900 1.100c.7-.7 1.800-.7 2.500 0l2.900 2.900c.7.700.7 1.800 0 2.500l-2.900 2.900c-.7.700-1.800.7-2.500 0L14 6.500c-.7-.7-.7-1.800 0-2.500z"/></svg>
<!-- account -->
<svg style="left:1368.800px;top:911px;width:23.200px;height:23.200px" viewBox="0 0 23.200 23.200" fill="none" stroke="#868686" stroke-width="1.500"><circle cx="11.600" cy="11.600" r="10.800"/><circle cx="11.600" cy="7.600" r="2.500" fill="#868686" stroke="none"/><path d="M5.800 12.200h11.600v.6a5.800 5.400 0 0 1-11.600 0z" fill="#868686" stroke="none"/></svg>
<!-- gear -->
<svg style="left:1369.300px;top:962px;width:22px;height:22.600px" viewBox="-11 -11.300 22 22.600" fill="none" stroke="#868686" stroke-width="1.500" stroke-linejoin="round"><path d="M-2.200-10.500h4.400l.8 3.100 2.200 1.300 3.100-.9 2.200 3.800-2.300 2.200v2.600l2.300 2.200-2.200 3.800-3.100-.9-2.200 1.300-.8 3.100h-4.400l-.8-3.100-2.200-1.300-3.100.9-2.200-3.800 2.300-2.200v-2.600l-2.300-2.200 2.200-3.800 3.100.9 2.200-1.300z"/><circle cx="0" cy="0" r="2.500"/></svg>
<!-- STATUS BAR -->
<div class="a" style="left:51px;top:999px;width:1355px;height:23px;background:#181818;border-top:1px solid #2b2b2b;border-radius:0 0 9px 9px"></div>
<svg style="left:62.600px;top:1003px;width:11.600px;height:14.200px" viewBox="0 0 11.600 14.200" fill="none" stroke="#d4d4d4" stroke-width="1.200" stroke-linecap="round" stroke-linejoin="round"><path d="M.7 4.700L5.200 9.200.7 13.700M11 .5L6.400 5.200 11 9.900"/></svg>
<svg style="left:94.500px;top:1003.300px;width:15.600px;height:15.600px" viewBox="0 0 15.600 15.600" fill="none" stroke="#d4d4d4" stroke-width="1.100" stroke-linecap="round"><circle cx="7.800" cy="7.800" r="7.100"/><path d="M5 5l5.600 5.600M10.600 5L5 10.600"/></svg>
<span class="t" style="left:114.6px;top:1004.4px;font-size:13.4px;color:#dcdcdc;letter-spacing:-0.053px">5</span>
<svg style="left:126.500px;top:1002.900px;width:15.800px;height:14px" viewBox="0 0 15.800 14" fill="none" stroke="#d8d8d8" stroke-width="1.150" stroke-linejoin="round" stroke-linecap="round"><path d="M7.900.9L15.100 13.300H.7z"/><path d="M7.900 5.200v4.300M7.900 11.100v.3"/></svg>
<span class="t" style="left:146.7px;top:1004.4px;font-size:13.4px;color:#dcdcdc;letter-spacing:-0.053px">0</span>
<span class="t" style="left:1028.3px;top:1004.4px;font-size:13.4px;color:#d0d0d0;letter-spacing:-0.051px">Ln 1, Col 1</span>
<span class="t" style="left:1110.5px;top:1004.4px;font-size:13.4px;color:#d0d0d0;letter-spacing:-0.174px">Spaces: 2</span>
<span class="t" style="left:1186.6px;top:1004.4px;font-size:13.4px;color:#d0d0d0;letter-spacing:0.013px">UTF-8</span>
<span class="t" style="left:1242.3px;top:1004.4px;font-size:13.4px;color:#d0d0d0;letter-spacing:-0.770px">LF</span>
<svg style="left:1275.400px;top:1003.600px;width:14.600px;height:15px" viewBox="0 0 14.600 15" fill="none" stroke="#d0d0d0" stroke-width="1.100" stroke-linecap="round" stroke-linejoin="round"><path d="M4.400.7C3.200.7 2.700 1.300 2.700 2.400v2.200c0 .9-.5 1.500-1.700 1.500 1.200 0 1.700.6 1.700 1.500v2.200c0 1.100.5 1.700 1.700 1.700M8.200.7c1.200 0 1.700.6 1.700 1.700v2.200c0 .9.500 1.500 1.700 1.500-1.200 0-1.700.6-1.700 1.500v.6"/><circle cx="10.800" cy="11.800" r="2.400"/><path d="M9.900 10.900l1.800 1.800M11.700 10.900l-1.800 1.800" stroke-width=".8"/></svg>
<span class="t" style="left:1297.2px;top:1004.4px;font-size:13.4px;color:#d0d0d0;letter-spacing:0.073px">TypeScript</span>
<svg style="left:1380px;top:1003px;width:14.200px;height:15px" viewBox="0 0 14.200 15" fill="none" stroke="#d0d0d0" stroke-width="1.100" stroke-linecap="round" stroke-linejoin="round"><path d="M7.600 1.700C4.600 1.200 2.700 3.300 2.700 5.800v3.400L.9 11.800h10.800l-1.700-2.600V7.600M4.800 12.200c0 1 .7 1.800 1.600 1.800s1.600-.8 1.600-1.800"/><circle cx="11" cy="3.200" r="2.700" fill="#d8d8d8" stroke="none"/></svg>
</div>
</body></html>
